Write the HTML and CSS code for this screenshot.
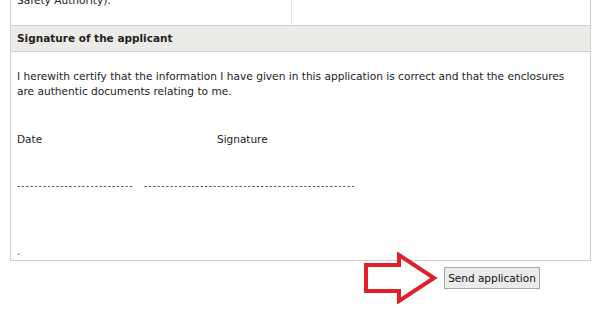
FILE: index.html
```html
<!DOCTYPE html>
<html>
<head>
<meta charset="utf-8">
<link rel="stylesheet" href="styles.css">
</head>
<body>
<div class="page">
  <div class="box">
    <div class="top-row">
      <div class="cell cell-left">Federal Office of Public Health (Radiation Protection<br>Safety Authority).</div>
      <div class="cell cell-right"></div>
    </div>
    <div class="section-head">Signature of the applicant</div>
    <div class="section-body">
      <p class="certify">I herewith certify that the information I have given in this application is correct and that the enclosures are authentic documents relating to me.</p>
      <div class="sig-labels">
        <span class="lbl-date">Date</span>
        <span class="lbl-sig">Signature</span>
      </div>
      <div class="sig-lines">
        <span class="line-date">---------------------------</span>
        <span class="line-sig">-------------------------------------------------</span>
      </div>
      <div class="dot">.</div>
    </div>
  </div>
  <div class="actions">
    <svg class="arrow" width="78" height="52" viewBox="0 0 78 52">
      <polygon points="3,13 36,13 36,3 71,26 36,49 36,39 3,39" fill="#fff" stroke="#e0202b" stroke-width="4" stroke-linejoin="miter"/>
    </svg>
    <button class="send" type="button">Send application</button>
  </div>
</div>
</body>
</html>
```

FILE: styles.css
```css
html, body {
  margin: 0;
  padding: 0;
  background: #fff;
}
body {
  font-family: "DejaVu Sans", Verdana, sans-serif;
  font-size: 10.6px;
  color: #222;
}
.page {
  margin-top: -29px;
  padding-left: 10px;
  width: 581px;
}
.box {
  border: 1px solid #cfcfcf;
  border-top: none;
}
.top-row {
  display: flex;
  border-bottom: 1px solid #cfcfcf;
}
.cell {
  padding: 5px 6px 0 6px;
  height: 54px;
  line-height: 16px;
  box-sizing: border-box;
  white-space: nowrap;
  overflow: hidden;
}
.cell-left {
  width: 281px;
  border-right: 1px solid #e6e6e6;
}
.cell-right {
  flex: 1;
}
.section-head {
  background: #ecebe7;
  height: 25px;
  line-height: 25px;
  padding-left: 6px;
  font-weight: bold;
  font-size: 10.5px;
  border-bottom: 1px solid #cfcfcf;
}
.section-body {
  padding: 17px 6px 0 6px;
  height: 208px;
  box-sizing: border-box;
  line-height: 15px;
}
.certify {
  margin: 0;
  max-width: 560px;
}
.sig-labels {
  margin-top: 33px;
  display: flex;
  font-size: 10.5px;
}
.lbl-date {
  width: 200px;
}
.sig-lines {
  margin-top: 32px;
  display: flex;
  font-size: 9px;
  letter-spacing: 1.07px;
}
.line-date {
  width: 127px;
}
.dot {
  margin-top: 50px;
  color: #444;
}
.actions {
  display: flex;
  align-items: center;
  padding-left: 343px;
  margin-top: -9px;
}
.arrow {
  display: block;
  margin-left: 10px;
}
.send {
  margin-left: 3px;
  width: 96px;
  height: 22px;
  padding: 0;
  font-family: "DejaVu Sans", Verdana, sans-serif;
  font-size: 10.5px;
  color: #111;
  background: #ebebeb;
  border: 1px solid #a9a9a9;
  border-radius: 0;
}
```
